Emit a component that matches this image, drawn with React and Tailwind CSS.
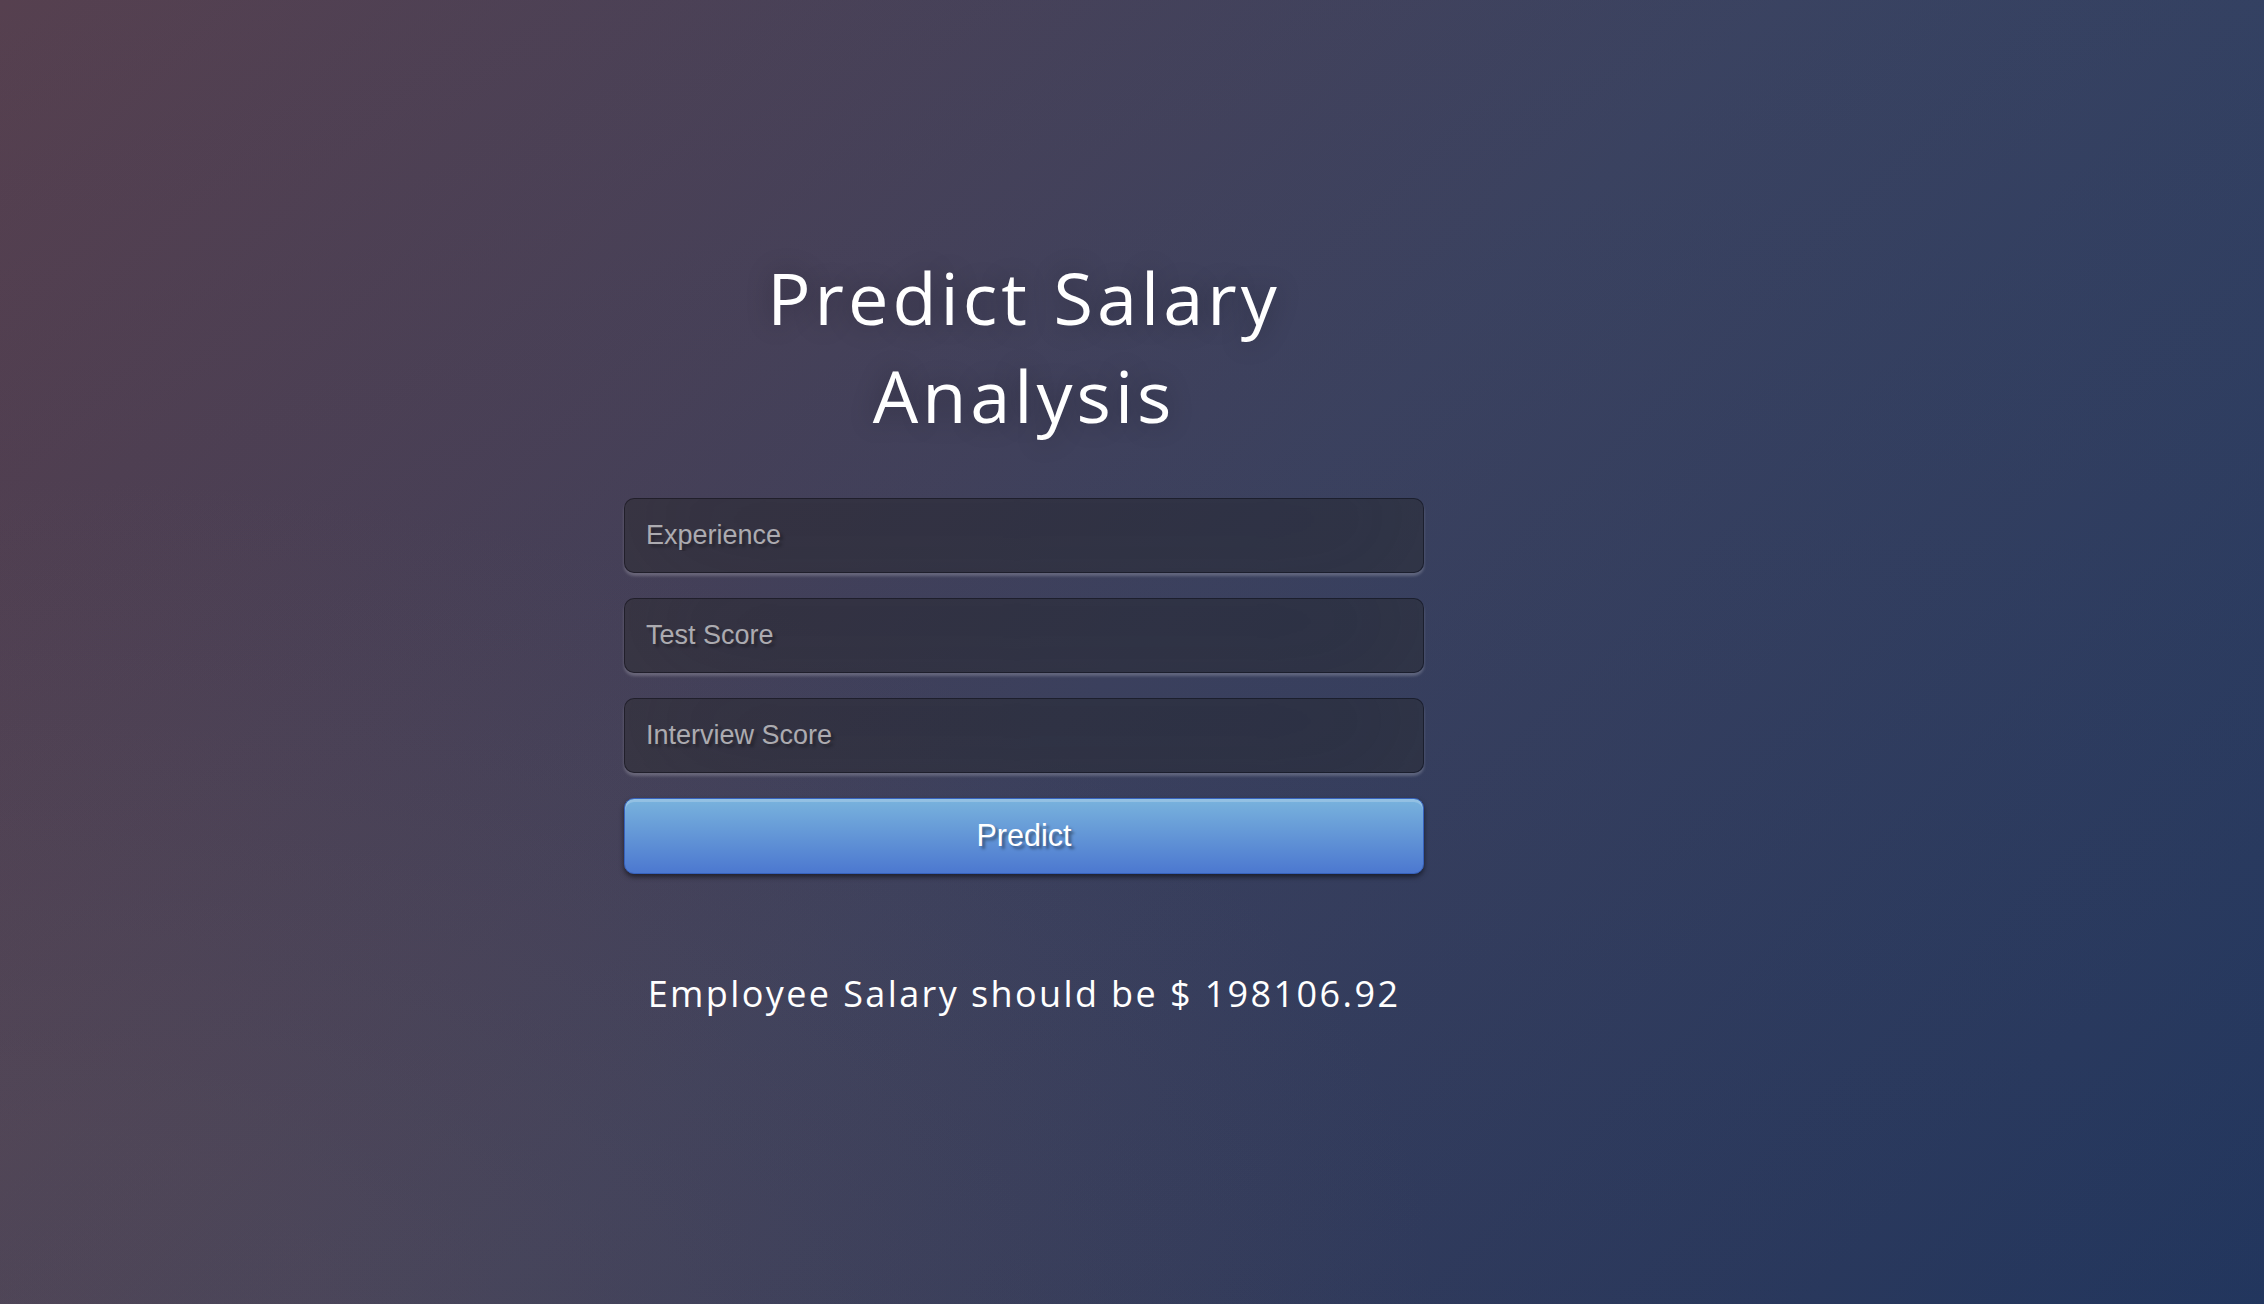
export default function App() {
  const inputCls =
    "h-[75px] w-full rounded-[10px] border border-[rgba(0,0,0,0.3)] bg-[rgba(0,0,0,0.3)] pl-[21px] pr-[21px] text-[27px] text-white outline-none [font-family:'Liberation_Sans',Arial,sans-serif] [text-shadow:3px_3px_3px_rgba(0,0,0,0.3)] shadow-[inset_0_-13px_120px_rgba(100,100,100,0.2),0_3px_3px_rgba(255,255,255,0.2)] placeholder:text-[#acabb0]";
  return (
    <div className="min-h-screen w-full bg-[radial-gradient(ellipse_at_0%_100%,rgba(110,95,95,.25)_10%,rgba(110,95,95,0)_45%),linear-gradient(to_bottom,rgba(40,110,160,.15)_0%,rgba(40,110,160,.05)_100%),linear-gradient(135deg,#5e3841_0%,#3d3b56_50%,#22335a_100%)] [font-family:'Open_Sans',sans-serif]">
      <div className="ml-[624px] flex w-[800px] flex-col pt-[248px]">
        <h1 className="text-center text-[72px] leading-[98px] font-normal tracking-[4px] text-white [text-shadow:0_0_27px_rgba(0,0,0,0.3)]">
          Predict Salary
          <br />
          Analysis
        </h1>
        <form className="mt-[54px] flex flex-col gap-[25px]" onSubmit={(e) => e.preventDefault()}>
          <input type="text" placeholder="Experience" className={inputCls} />
          <input type="text" placeholder="Test Score" className={inputCls} />
          <input type="text" placeholder="Interview Score" className={inputCls} />
          <button
            type="submit"
            className="h-[76px] w-full rounded-[10px] border border-[#3762bc] bg-[linear-gradient(to_bottom,#79b3dd,#4c78d0)] text-[30.5px] text-white [font-family:'Liberation_Sans',Arial,sans-serif] [text-shadow:3px_3px_3px_rgba(0,0,0,0.4)] shadow-[inset_0_3px_0_rgba(255,255,255,0.2),0_3px_5px_rgba(0,0,0,0.5)]"
          >
            Predict
          </button>
        </form>
        <p className="mt-[95px] text-center text-[36px] leading-[49px] tracking-[2.4px] text-white">
          Employee Salary should be $ 198106.92
        </p>
      </div>
    </div>
  );
}
